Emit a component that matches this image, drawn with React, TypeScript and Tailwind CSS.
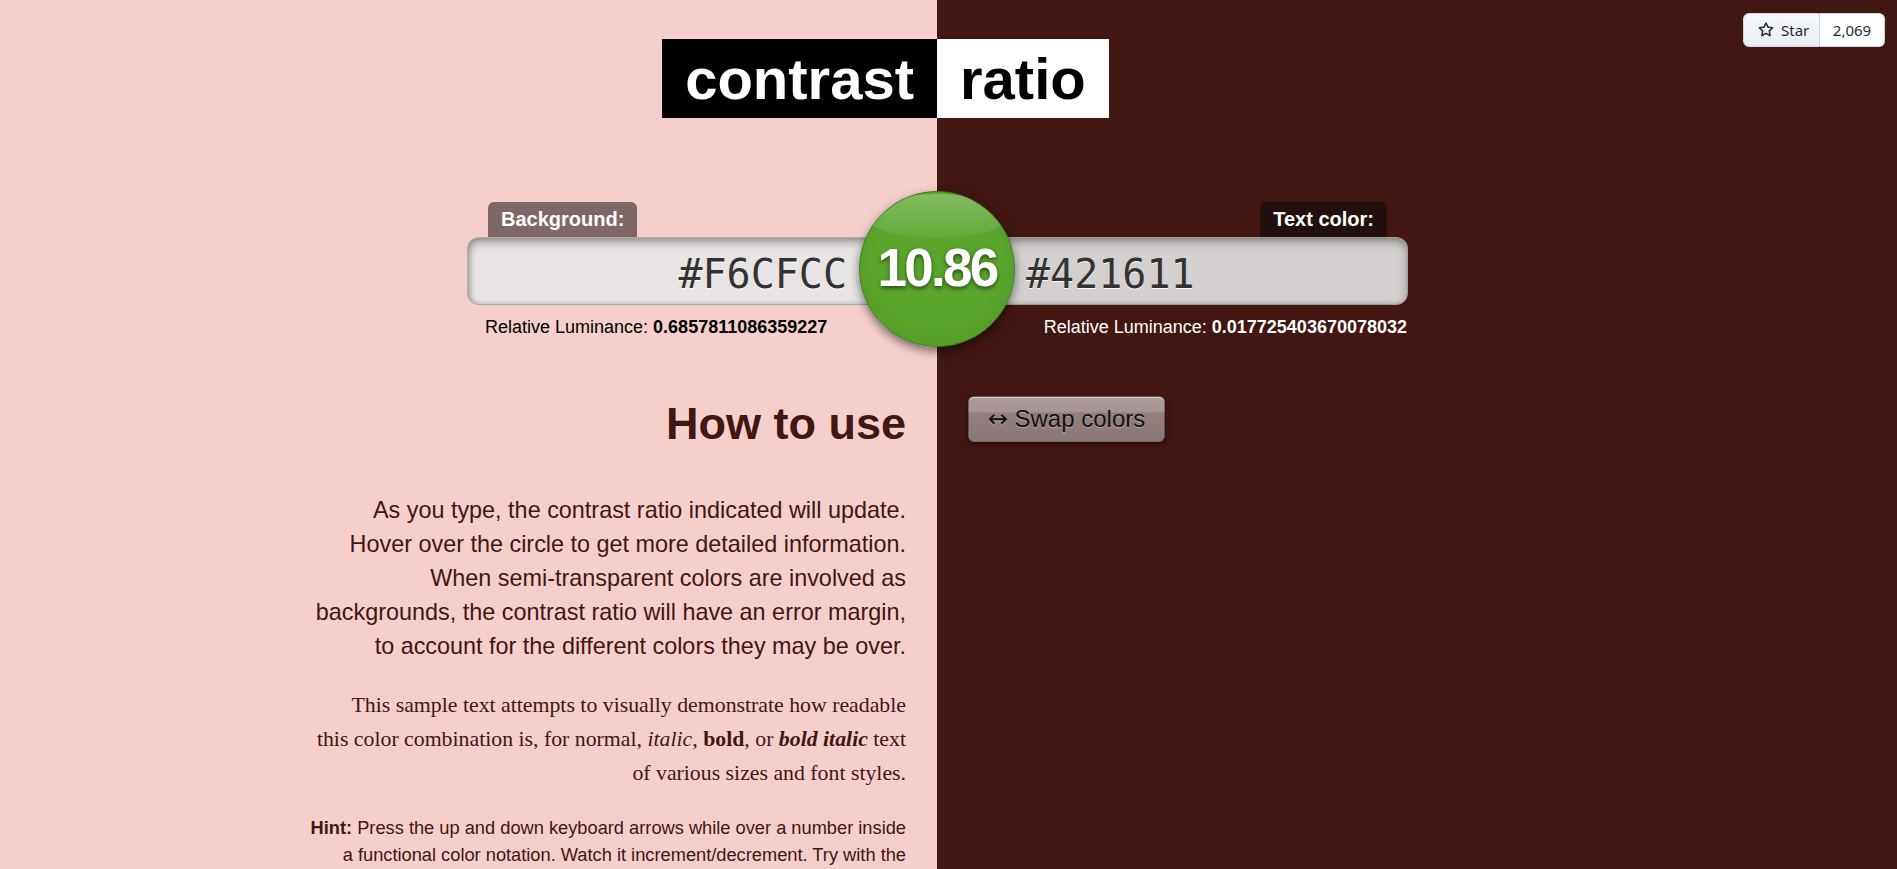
const StarIcon = () => (
  <svg viewBox="0 0 16 16" width="16" height="16" fill="currentColor" aria-hidden="true">
    <path d="M8 .25a.75.75 0 0 1 .673.418l1.882 3.815 4.21.612a.75.75 0 0 1 .416 1.279l-3.046 2.97.719 4.192a.751.751 0 0 1-1.088.791L8 12.347l-3.766 1.98a.75.75 0 0 1-1.088-.79l.72-4.194L.818 6.374a.75.75 0 0 1 .416-1.28l4.21-.611L7.327.668A.75.75 0 0 1 8 .25Zm0 2.445L6.615 5.5a.75.75 0 0 1-.564.41l-3.097.45 2.24 2.184a.75.75 0 0 1 .216.664l-.528 3.084 2.769-1.456a.75.75 0 0 1 .698 0l2.77 1.456-.53-3.084a.75.75 0 0 1 .216-.664l2.24-2.183-3.096-.45a.75.75 0 0 1-.564-.41L8 2.694Z" />
  </svg>
);

const GithubStar = () => (
  <div className="absolute right-[12px] top-[13px] flex h-[34px] font-['Noto_Sans','Open_Sans',sans-serif] text-[15px] font-normal text-[#24292f]">
    <span className="flex w-[77px] items-center gap-[7px] rounded-l-[6px] border border-[#d0d7de] bg-gradient-to-b from-[#f6f8fa] to-[#eaeef2] pl-[14px]">
      <StarIcon />
      Star
    </span>
    <span className="flex w-[65px] items-center justify-center rounded-r-[6px] border border-l-0 border-[#d0d7de] bg-white">
      2,069
    </span>
  </div>
);

const Logo = () => (
  <h1 className="grid grid-cols-2 pt-[39px] text-[58px] font-bold leading-[79px]">
    <span className="justify-self-end bg-black px-[23px] text-white">contrast</span>
    <span className="justify-self-start bg-white px-[23px] text-black">ratio</span>
  </h1>
);

const inputClass =
  "h-[68px] overflow-hidden rounded-[12px] border border-black/25 font-['DejaVu_Sans_Mono',monospace] text-[40px] leading-[72px] text-[#333] shadow-[inset_0_4px_8px_rgba(0,0,0,0.35),inset_2px_0_5px_rgba(0,0,0,0.12)] [text-shadow:0_1px_0_rgba(255,255,255,0.9)]";

const RatioCircle = () => (
  <div className="absolute left-1/2 top-[-11px] flex h-[156px] w-[156px] -translate-x-1/2 items-center justify-center overflow-hidden rounded-full border border-[#3d7a1e] bg-[radial-gradient(circle_at_50%_45%,#5aa52c_55%,#4f9526_100%)] shadow-[0_4px_10px_rgba(0,0,0,0.5)]">
    <div className="absolute left-[6px] right-[6px] top-[2px] h-[44px] rounded-[50%] bg-gradient-to-b from-white/25 to-white/5" />
    <span className="relative mt-[-2px] text-[53px] font-bold tracking-[-2.7px] text-white [text-shadow:0_2px_4px_rgba(0,0,0,0.55)]">
      10.86
    </span>
  </div>
);

const ColorInputs = () => (
  <div className="relative mt-[84px] grid grid-cols-2">
    <div className="flex justify-end">
      <div className="flex w-[470px] flex-col">
        <span className="ml-[21px] self-start rounded-t-[6px] bg-[#7e6867] px-[13px] text-[20px] font-bold leading-[35px] text-white">
          Background:
        </span>
        <div className={`${inputClass} bg-[#e8e4e3] pr-[89px] text-right`}>#F6CFCC</div>
        <p className="mt-[9px] pl-[18px] leading-[26px] text-black">
          Relative Luminance: <strong>0.6857811086359227</strong>
        </p>
      </div>
    </div>
    <div className="flex justify-start">
      <div className="flex w-[471px] flex-col">
        <span className="mr-[21px] self-end rounded-t-[6px] bg-[#230f0d] px-[13px] text-[20px] font-bold leading-[35px] text-white">
          Text color:
        </span>
        <div className={`${inputClass} bg-[#d4d0cf] pl-[88px] text-left`}>#421611</div>
        <p className="mt-[9px] pr-[1px] text-right leading-[26px] text-white">
          Relative Luminance: <strong>0.017725403670078032</strong>
        </p>
      </div>
    </div>
    <RatioCircle />
  </div>
);

const SwapButton = () => (
  <button
    type="button"
    className="h-[46px] w-[197px] rounded-[6px] border border-black/30 bg-[linear-gradient(#ad9c9c_0%,#a69494_34%,#928080_36%,#8b7777_100%)] text-[24px] leading-[44px] text-[#111] shadow-[0_2px_4px_rgba(0,0,0,0.5),inset_0_1px_0_rgba(255,255,255,0.55)] [text-shadow:0_1px_0_rgba(255,255,255,0.35)]"
  >
    <span className="font-['DejaVu_Sans',sans-serif]">↔</span> Swap colors
  </button>
);

export default function App() {
  return (
    <div className="relative min-h-screen w-full overflow-hidden bg-[linear-gradient(to_right,#f6cfcc_937px,#421611_937px)] font-['Liberation_Sans',Arial,sans-serif] text-[18px]">
      <GithubStar />
      <div className="w-[1874px] pb-16">
        <Logo />
        <ColorInputs />
        <div className="mt-[56px] grid grid-cols-2">
          <div className="flex justify-end pr-[31px]">
            <div className="w-[600px] text-right text-[#421611]">
              <h2 className="mt-[5px] text-[45px] font-bold leading-[45px]">How to use</h2>
              <p className="mt-[47px] text-[23.4px] leading-[34px]">
                As you type, the contrast ratio indicated will update. Hover over the circle to get
                more detailed information. When semi-transparent colors are involved as backgrounds,
                the contrast ratio will have an error margin, to account for the different colors
                they may be over.
              </p>
              <p className="mt-[25px] font-['Liberation_Serif','Times_New_Roman',serif] text-[21.8px] leading-[34px]">
                This sample text attempts to visually demonstrate how readable
                <br />
                this color combination is, for normal, <em>italic</em>, <strong>bold</strong>, or{" "}
                <strong>
                  <em>bold italic</em>
                </strong>{" "}
                text
                <br />
                of various sizes and font styles.
              </p>
              <p className="mt-[24px] text-[18.25px] leading-[27px]">
                <strong>Hint:</strong> Press the up and down keyboard arrows while over a number
                inside a functional color notation. Watch it increment/decrement. Try with the
                Shift, Alt and Meta keys too!
              </p>
            </div>
          </div>
          <div className="pl-[31px]">
            <SwapButton />
          </div>
        </div>
      </div>
    </div>
  );
}
